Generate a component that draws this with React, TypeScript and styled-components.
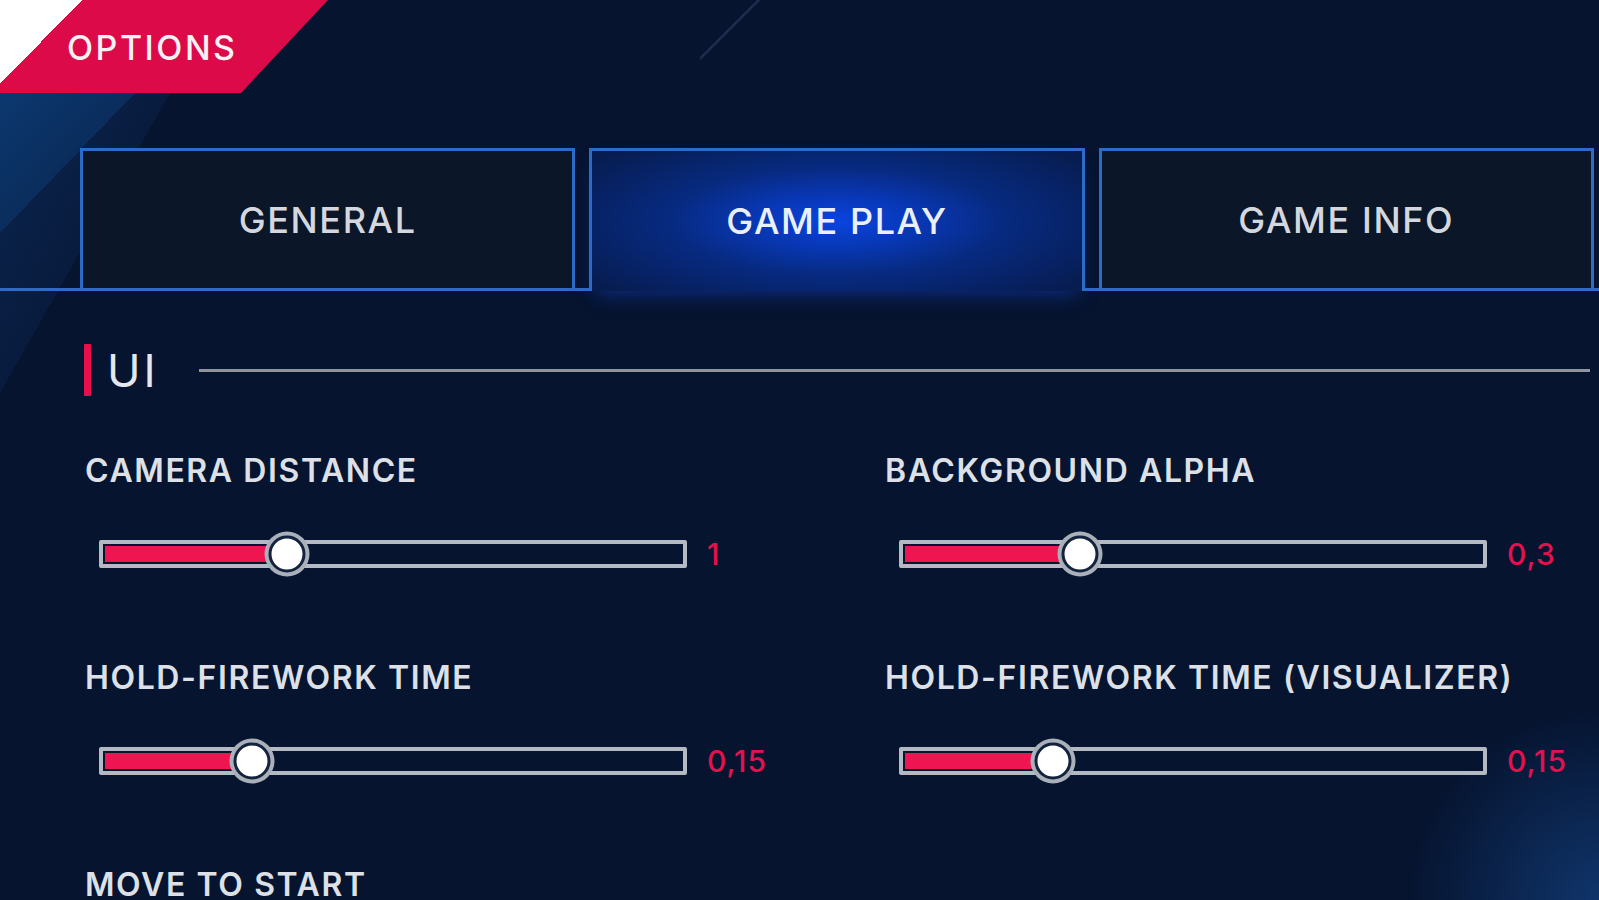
import React from "react";
import styled, { createGlobalStyle } from "styled-components";

const GlobalStyle = createGlobalStyle`
  html, body {
    margin: 0;
    padding: 0;
    background: #061430;
  }
  body {
    font-family: Inter, "Noto Sans", "DejaVu Sans", sans-serif;
    color: #dfe3e8;
    overflow: hidden;
  }
  * { box-sizing: border-box; }
`;

const Page = styled.div`
  width: 1599px;
  height: 900px;
  overflow: hidden;
  background-color: #061430;
  background-image:
    linear-gradient(to bottom right, #0c3870 0%, #0a2d5c 50%, transparent 50%),
    linear-gradient(to bottom right, rgba(20, 70, 140, 0.35) 0%, rgba(20, 70, 140, 0.15) 50%, transparent 50%),
    radial-gradient(circle at 100% 100%, rgba(25, 85, 165, 0.5) 0, rgba(25, 85, 165, 0) 190px),
    linear-gradient(135deg, transparent 0, transparent 48%, rgba(120, 150, 200, 0.25) 49%, transparent 51%);
  background-size: 135px 140px, 170px 300px, 100% 100%, 90px 90px;
  background-position: 0 93px, 0 93px, 0 0, 700px -30px;
  background-repeat: no-repeat;
  display: flex;
  flex-direction: column;

  & > * {
    flex-shrink: 0;
  }
`;

const Banner = styled.div`
  width: 328px;
  height: 93px;
  display: flex;
  align-items: center;
  padding-left: 67px;
  background-color: #dc0a49;
  background-image: linear-gradient(to bottom right, #ffffff 50%, transparent 50%);
  background-size: 82px 84px;
  background-repeat: no-repeat;
  clip-path: polygon(0 0, 328px 0, 241px 93px, 0 93px);
`;

const BannerTitle = styled.h1`
  margin: 0;
  font-size: 34px;
  font-weight: 500;
  letter-spacing: 2.5px;
  color: #f6f1f3;
  line-height: 1;
  transform: translateY(1px);
`;

const TabBar = styled.nav`
  margin-top: 55px;
  height: 143px;
  display: flex;
  gap: 14px;
  padding: 0 5px 0 80px;
  box-shadow: inset 0 -3px 0 #2d6cc6;
`;

const Tab = styled.button<{ $active?: boolean }>`
  flex: 1;
  height: 100%;
  display: flex;
  align-items: center;
  justify-content: center;
  font-family: Inter, "Noto Sans", sans-serif;
  font-size: 36px;
  font-weight: 500;
  letter-spacing: 1.6px;
  color: ${(p) => (p.$active ? "#e9effb" : "#d4d8de")};
  border: 3px solid #2d6cc6;
  border-bottom: ${(p) => (p.$active ? "none" : "3px solid #2d6cc6")};
  background: ${(p) =>
    p.$active
      ? "radial-gradient(ellipse 62% 70% at 50% 50%, #0a44e0 0%, #0838b8 25%, #072a80 55%, #071d52 100%)"
      : "#0b1629"};
  box-shadow: ${(p) => (p.$active ? "0 10px 18px -8px rgba(20, 70, 220, 0.55)" : "none")};
  padding: 0;
  cursor: pointer;
`;

const SectionHeader = styled.div`
  margin-top: 53px;
  height: 52px;
  display: flex;
  align-items: center;
  padding: 0 9px 0 84px;
`;

const Accent = styled.span`
  width: 7px;
  height: 52px;
  background: #ea0f4c;
  border-radius: 1px;
  flex: none;
`;

const SectionTitle = styled.h2`
  margin: 0 0 0 16px;
  font-size: 45px;
  font-weight: 400;
  letter-spacing: 3px;
  color: #e4e8ee;
  line-height: 1;
`;

const Rule = styled.div`
  flex: 1;
  height: 3px;
  margin-left: 40px;
  background: #8e959f;
`;

const Grid = styled.div`
  margin-top: 57px;
  padding-left: 85px;
  display: grid;
  grid-template-columns: 800px 1fr;
  row-gap: 81px;
`;

const Setting = styled.div`
  display: flex;
  flex-direction: column;
`;

const Label = styled.div`
  font-size: 32px;
  font-weight: 600;
  letter-spacing: 1.6px;
  line-height: 36px;
  color: #dde1e7;
  white-space: nowrap;
`;

const SliderRow = styled.div`
  margin-top: 40px;
  margin-left: 14px;
  height: 50px;
  display: flex;
  align-items: center;
  gap: 20px;
`;

const Track = styled.div`
  position: relative;
  width: 588px;
  height: 28px;
  border: 4px solid #b4bac3;
  border-radius: 2px;
  padding: 2px 2px;
  background: #061430;
  flex: none;
`;

const Fill = styled.div`
  height: 100%;
  background: #ee1551;
`;

const Thumb = styled.div`
  position: absolute;
  top: 50%;
  width: 37px;
  height: 37px;
  border-radius: 50%;
  background: #ffffff;
  border: 3px solid #13233d;
  box-shadow: 0 0 0 4px #a9b0b9;
  transform: translate(-50%, -50%);
`;

const Value = styled.span`
  font-size: 30px;
  font-weight: 500;
  letter-spacing: 1px;
  color: #e5104e;
  line-height: 1;
`;

type SliderSetting = { label: string; value: string; pos: number };

const settings: SliderSetting[] = [
  { label: "CAMERA DISTANCE", value: "1", pos: 0.318 },
  { label: "BACKGROUND ALPHA", value: "0,3", pos: 0.306 },
  { label: "HOLD-FIREWORK TIME", value: "0,15", pos: 0.257 },
  { label: "HOLD-FIREWORK TIME (VISUALIZER)", value: "0,15", pos: 0.259 },
];

function Slider({ value, pos }: { value: string; pos: number }) {
  return (
    <SliderRow>
      <Track>
        <Fill style={{ width: `${pos * 100}%` }} />
        <Thumb style={{ left: `${pos * 100}%` }} />
      </Track>
      <Value>{value}</Value>
    </SliderRow>
  );
}

export default function App() {
  return (
    <>
      <GlobalStyle />
      <Page>
        <Banner>
          <BannerTitle>OPTIONS</BannerTitle>
        </Banner>
        <TabBar>
          <Tab>GENERAL</Tab>
          <Tab $active>GAME PLAY</Tab>
          <Tab>GAME INFO</Tab>
        </TabBar>
        <SectionHeader>
          <Accent />
          <SectionTitle>UI</SectionTitle>
          <Rule />
        </SectionHeader>
        <Grid>
          {settings.map((s) => (
            <Setting key={s.label}>
              <Label>{s.label}</Label>
              <Slider value={s.value} pos={s.pos} />
            </Setting>
          ))}
          <Setting>
            <Label>MOVE TO START</Label>
          </Setting>
        </Grid>
      </Page>
    </>
  );
}
